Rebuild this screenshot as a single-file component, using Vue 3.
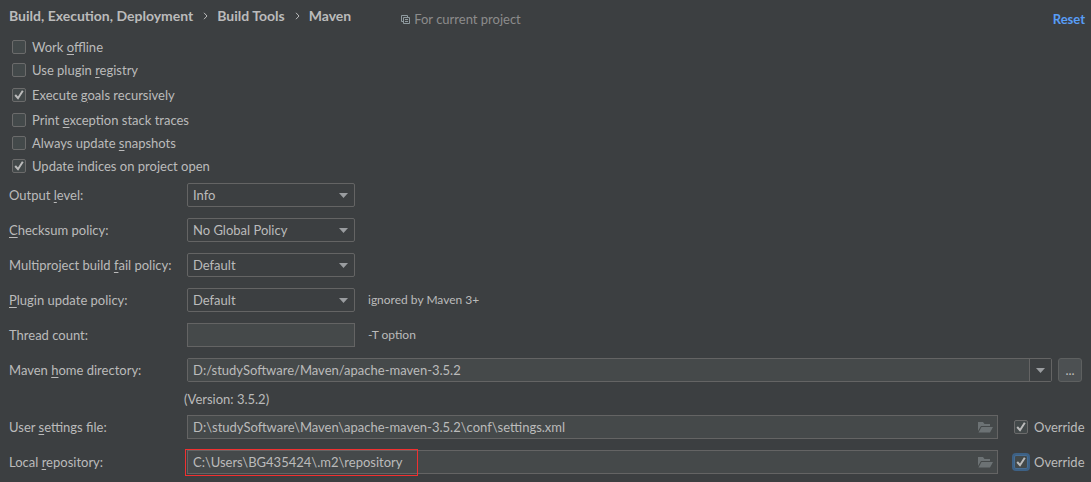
<template>
  <main class="settings">
    <header class="header">
      <nav class="crumbs" aria-label="Breadcrumb">
        <template v-for="(crumb, index) in crumbs" :key="crumb">
          <svg v-if="index" class="crumb-arrow" viewBox="0 0 5 8" aria-hidden="true">
            <path d="M1 0.8 L4 4 L1 7.2" />
          </svg>
          <span>{{ crumb }}</span>
        </template>
      </nav>
      <div class="scope">
        <svg class="scope-icon" viewBox="0 0 9 9" aria-hidden="true">
          <path d="M2.5 6.5 H0.5 V0.5 H6.5 V2.5 M2.5 2.5 H8.5 V8.5 H2.5 Z M4 4.5 H7 M4 6.5 H7" />
        </svg>
        <span>For current project</span>
      </div>
      <a class="reset" href="#" @click.prevent="reset">Reset</a>
    </header>

    <section class="options">
      <label v-for="option in options" :key="option.key" :class="['option', option.tall && 'tall']">
        <input v-model="option.checked" type="checkbox" class="check" />
        <span>{{ option.text[0] }}<u>{{ option.text[1] }}</u>{{ option.text[2] }}</span>
      </label>
    </section>

    <section class="fields">
      <div v-for="policy in policies" :key="policy.key" class="row">
        <label class="name" :for="policy.key">{{ policy.text[0] }}<u>{{ policy.text[1] }}</u>{{ policy.text[2] }}</label>
        <div class="select-wrap">
          <select :id="policy.key" v-model="policy.value" class="control">
            <option v-for="item in policy.items" :key="item">{{ item }}</option>
          </select>
          <svg class="caret" viewBox="0 0 9 5" aria-hidden="true"><path d="M0 0 H9 L4.5 5 Z" /></svg>
        </div>
        <span v-if="policy.hint" class="hint">{{ policy.hint }}</span>
      </div>

      <div class="row">
        <label class="name" for="threads">Thread count:</label>
        <input id="threads" v-model="threads" type="text" class="control filled short" />
        <span class="hint">-T option</span>
      </div>

      <div class="home">
        <div class="row">
          <label class="name" for="home">Maven <u>h</u>ome directory:</label>
          <div class="combo">
            <input id="home" v-model="home" type="text" class="combo-input" />
            <button type="button" class="combo-button" aria-label="Show Maven homes">
              <svg class="combo-caret" viewBox="0 0 9 5" aria-hidden="true"><path d="M0 0 H9 L4.5 5 Z" /></svg>
            </button>
          </div>
          <button type="button" class="browse" aria-label="Browse">...</button>
        </div>
        <p class="version">(Version: 3.5.2)</p>
      </div>

      <div v-for="file in files" :key="file.key" class="row">
        <label class="name" :for="file.key">{{ file.text[0] }}<u>{{ file.text[1] }}</u>{{ file.text[2] }}</label>
        <div class="path">
          <input :id="file.key" v-model="file.value" type="text" class="control filled" />
          <svg class="folder" viewBox="0 0 16 12" aria-hidden="true">
            <path d="M1 10 V1 H6 L7.5 3 H13 V5 H4 Z" />
            <path d="M4.5 6 H16 L13 11.5 H1.5 Z" />
          </svg>
          <span v-if="file.marked" class="marker"></span>
        </div>
        <label class="override">
          <input v-model="file.override" type="checkbox" :class="['check', file.focused && 'focused']" />
          <span class="override-text">Override</span>
        </label>
      </div>
    </section>
  </main>
</template>

<script setup>
import { ref } from 'vue'

const crumbs = ['Build, Execution, Deployment', 'Build Tools', 'Maven']

const defaultOptions = () => [
  { key: 'offline', text: ['Work ', 'o', 'ffline'], checked: false },
  { key: 'registry', text: ['Use plugin ', 'r', 'egistry'], checked: false },
  { key: 'recursive', text: ['Execute ', 'g', 'oals recursively'], checked: true, tall: true },
  { key: 'traces', text: ['Print ', 'e', 'xception stack traces'], checked: false },
  { key: 'snapshots', text: ['Always update ', 's', 'napshots'], checked: false },
  { key: 'indices', text: ['Update indices on project open', '', ''], checked: true }
]

const options = ref(defaultOptions())

const policies = ref([
  { key: 'output', text: ['Output ', 'l', 'evel:'], value: 'Info', items: ['Debug', 'Info', 'Warn', 'Error'] },
  { key: 'checksum', text: ['', 'C', 'hecksum policy:'], value: 'No Global Policy', items: ['No Global Policy', 'Warn', 'Fail'] },
  { key: 'fail', text: ['Multiproject build ', 'f', 'ail policy:'], value: 'Default', items: ['Default', 'Fail at end', 'Never fail'] },
  { key: 'plugins', text: ['', 'P', 'lugin update policy:'], value: 'Default', items: ['Default', 'Update', 'Do not update'], hint: 'ignored by Maven 3+' }
])

const threads = ref('')
const home = ref('D:/studySoftware/Maven/apache-maven-3.5.2')

const files = ref([
  {
    key: 'settings',
    text: ['User ', 's', 'ettings file:'],
    value: 'D:\\studySoftware\\Maven\\apache-maven-3.5.2\\conf\\settings.xml',
    override: true
  },
  {
    key: 'repository',
    text: ['Local ', 'r', 'epository:'],
    value: 'C:\\Users\\BG435424\\.m2\\repository',
    override: true,
    focused: true,
    marked: true
  }
])

function reset() {
  options.value = defaultOptions()
}
</script>

<style>
body {
  background: #3c3f41;
}
</style>

<style scoped>
.settings {
  font-family: Lato, "Noto Sans", sans-serif;
  font-size: 13px;
  line-height: 20px;
  color: #bbbbbb;
  white-space: nowrap;
}

input,
select,
button {
  box-sizing: border-box;
  margin: 0;
  font: inherit;
  color: inherit;
  outline: none;
}

u {
  text-underline-offset: 2px;
}

.header {
  display: flex;
  align-items: center;
  padding: 3px 6px 6px 9px;
}

.crumbs {
  display: flex;
  align-items: center;
  font-size: 14px;
  font-weight: 700;
}

.crumb-arrow {
  width: 5px;
  height: 8px;
  margin: 0 9px 0 10px;
  fill: none;
  stroke: #bbbbbb;
}

.scope {
  display: flex;
  align-items: center;
  gap: 4px;
  margin: 6px 0 0 50px;
  color: #8c8c8c;
}

.scope-icon {
  width: 9px;
  height: 9px;
  fill: none;
  stroke: #8f9a9f;
}

.reset {
  margin-left: auto;
  padding-top: 6px;
  font-weight: 700;
  color: #589df6;
  text-decoration: none;
}

.options {
  padding-left: 12px;
}

.option {
  display: flex;
  align-items: center;
  gap: 6px;
  width: fit-content;
  height: 23px;
}

.option.tall {
  height: 27px;
}

.check {
  flex: none;
  appearance: none;
  width: 14px;
  height: 14px;
  border: 1px solid #6b6b6b;
  border-radius: 2px;
  background: #43494a;
}

.check:checked {
  background: #43494a url("data:image/svg+xml,%3Csvg xmlns='http://www.w3.org/2000/svg' viewBox='0 0 12 12'%3E%3Cpath d='M2.2 6 L5 9.2 L9.8 1.8' fill='none' stroke='%23bbbbbb' stroke-width='2'/%3E%3C/svg%3E") center / 12px 12px no-repeat;
}

.check.focused {
  border-color: #466d94;
  box-shadow: 0 0 0 2px #3d6185;
}

.fields {
  display: flex;
  flex-direction: column;
  gap: 11px;
  padding: 6px 6px 6px 9px;
}

.row {
  display: flex;
  align-items: center;
  height: 24px;
}

.name {
  flex: none;
  width: 178px;
}

.select-wrap {
  position: relative;
  width: 168px;
}

.control {
  display: block;
  width: 100%;
  height: 24px;
  padding: 0 5px;
  border: 1px solid #646464;
  border-radius: 2px;
  background: #3c3f41;
  appearance: none;
}

.control.filled {
  border-radius: 0;
  background: #45494a;
}

.control.short {
  width: 168px;
}

.caret {
  position: absolute;
  top: 10px;
  right: 7px;
  width: 9px;
  height: 5px;
  fill: #9a9da0;
  pointer-events: none;
}

.hint {
  margin-left: 13px;
  font-size: 12px;
}

.combo {
  display: flex;
  flex: 1;
  box-sizing: border-box;
  height: 24px;
  border: 1px solid #646464;
  border-radius: 2px;
}

.combo-input {
  flex: 1;
  min-width: 0;
  padding: 0 5px;
  border: 0;
  background: #45494a;
}

.combo-button {
  display: flex;
  align-items: center;
  justify-content: center;
  width: 22px;
  padding: 0;
  border: 0;
  border-left: 1px solid #646464;
  background: #3c3f41;
}

.combo-caret {
  width: 9px;
  height: 5px;
  fill: #9a9da0;
}

.browse {
  width: 24px;
  height: 24px;
  margin: 0 3px 0 6px;
  padding: 0;
  border: 1px solid #5e6060;
  border-radius: 3px;
  background: #4c5052;
  line-height: 20px;
}

.version {
  margin: 7px 0 -5px 175px;
}

.path {
  position: relative;
  flex: 1;
}

.folder {
  position: absolute;
  top: 6px;
  right: 5px;
  width: 16px;
  height: 12px;
  fill: #6c7274;
}

.marker {
  position: absolute;
  top: -1px;
  left: -2px;
  box-sizing: border-box;
  width: 233px;
  height: 27px;
  border: 1px solid #f03030;
  pointer-events: none;
}

.override {
  display: flex;
  align-items: center;
  gap: 6px;
  margin-left: 16px;
}

.override-text {
  min-width: 51px;
}
</style>
